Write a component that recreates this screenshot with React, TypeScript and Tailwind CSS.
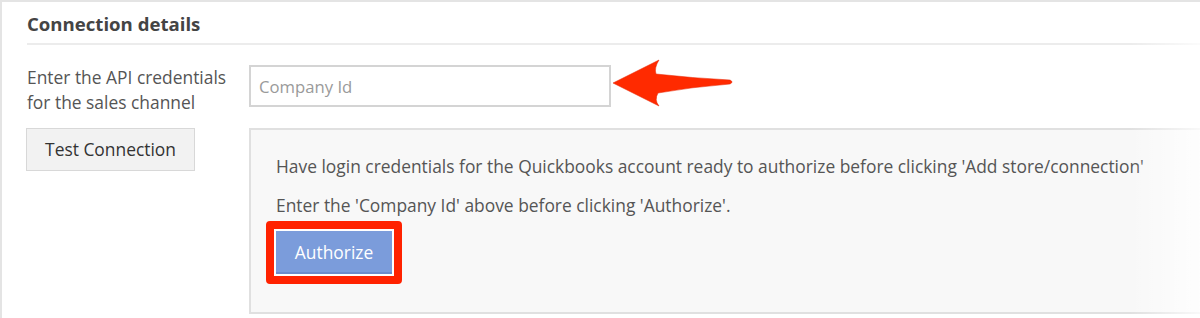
import React from 'react';

const RedArrow: React.FC = () => (
  <svg width="124" height="52" viewBox="0 0 124 52" className="ml-[1px] -mt-[7px] shrink-0">
    <path
      d="M1,25 L47,2 Q42,10 44,16 Q80,20 118,22 Q122,24 118,26 Q80,29 46,35 Q42,42 47,48 Z"
      fill="#ff2a00"
      stroke="#e52200"
      strokeWidth="0.5"
      strokeLinejoin="round"
    />
  </svg>
);

const ConnectionDetails: React.FC = () => {
  return (
    <div className="relative h-[318px] w-[1200px] overflow-hidden border-l-2 border-t-2 border-[#e4e4e4] bg-white font-['Open_Sans',sans-serif]">
      <div className="pl-[25px]">
        <h3 className="pt-[10px] text-[18.6px] font-bold leading-[24px] text-[#444]">Connection details</h3>
        <div className="mt-[7px] h-[2px] bg-[#ececec]" />

        <div className="mt-[20px] flex">
          <div className="w-[222px] shrink-0 text-[17.4px] leading-[25px] text-[#555]">
            Enter the API credentials
            <br />
            for the sales channel
          </div>
          <input
            type="text"
            placeholder="Company Id"
            className="h-[42px] w-[362px] shrink-0 border-2 border-[#d4d4d4] bg-white px-[8px] text-[16.7px] text-[#555] placeholder:text-[#9a9a9a] outline-none"
          />
          <RedArrow />
        </div>

        <div className="mt-[13px] flex">
          <div className="w-[222px] shrink-0">
            <button className="h-[43px] w-[169px] -ml-[1px] border border-[#d8d8d8] bg-[#f2f2f2] text-[17.4px] text-[#333]">
              Test Connection
            </button>
          </div>
          <div className="h-[186px] w-[1000px] shrink-0 border-2 border-[#e0e0e0] bg-[#f8f8f8] pl-[25px] pt-[24px] text-[17.4px] leading-[24px] text-[#555]">
            <p className="whitespace-nowrap">Have login credentials for the Quickbooks account ready to authorize before clicking 'Add store/connection'</p>
            <p className="mt-[15px] whitespace-nowrap">Enter the 'Company Id' above before clicking 'Authorize'.</p>
            <div className="mt-[4px] -ml-[10px] inline-block rounded-[4px] border-[8px] border-[#ff2200] bg-white p-[2px]">
              <button className="block h-[43px] w-[116px] border-b-2 border-[#6c8bcb] bg-[#7b9cdb] text-[17.4px] text-white">
                Authorize
              </button>
            </div>
          </div>
        </div>
      </div>
      <div className="pointer-events-none absolute right-0 top-0 h-full w-[70px] bg-linear-to-r from-white/0 to-white/80" />
    </div>
  );
};

export default function App() {
  return <ConnectionDetails />;
}
